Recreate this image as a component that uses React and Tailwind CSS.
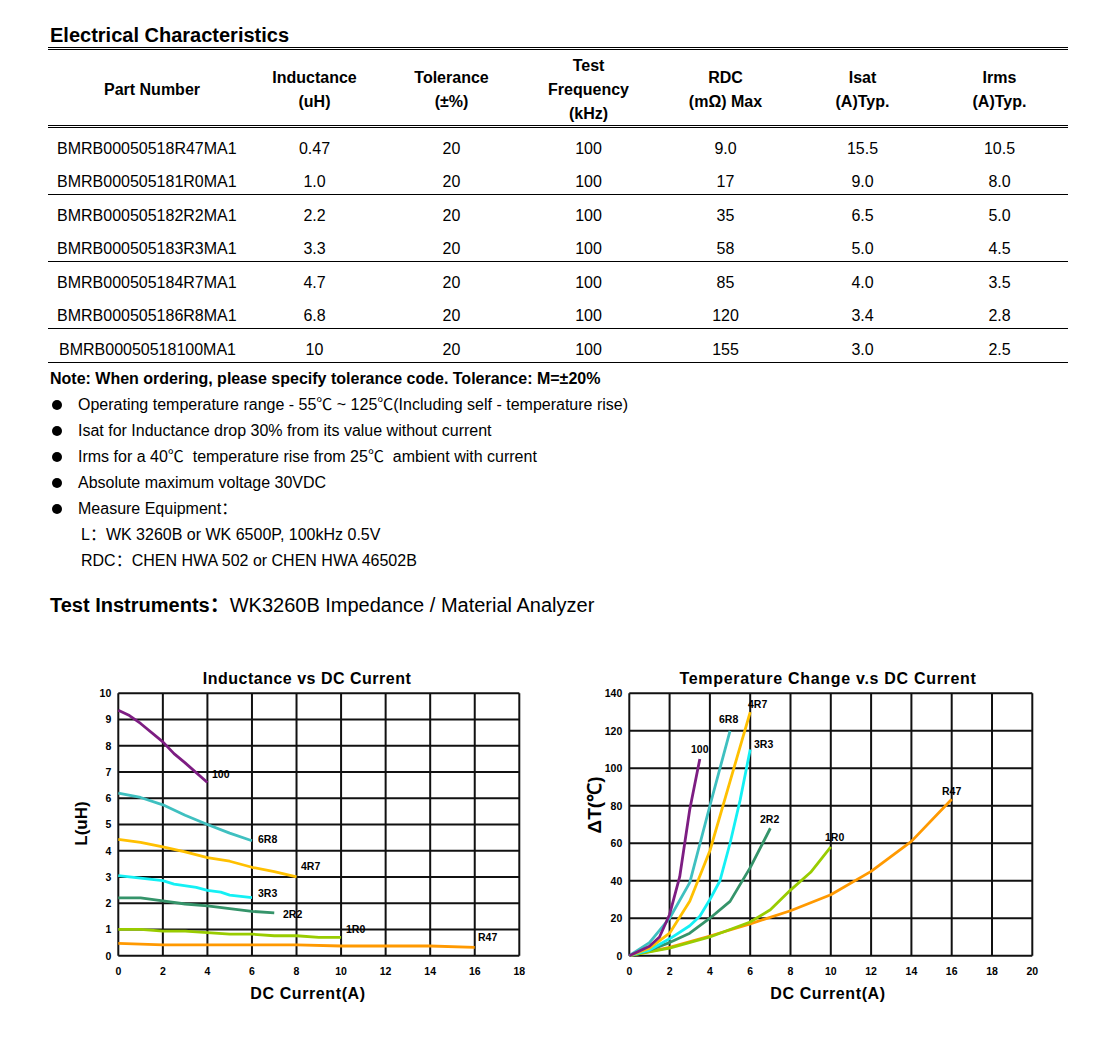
import React from "react";

const rows = [
  [
    ["BMRB00050518R47MA1", "0.47", "20", "100", "9.0", "15.5", "10.5"],
    ["BMRB000505181R0MA1", "1.0", "20", "100", "17", "9.0", "8.0"],
  ],
  [
    ["BMRB000505182R2MA1", "2.2", "20", "100", "35", "6.5", "5.0"],
    ["BMRB000505183R3MA1", "3.3", "20", "100", "58", "5.0", "4.5"],
  ],
  [
    ["BMRB000505184R7MA1", "4.7", "20", "100", "85", "4.0", "3.5"],
    ["BMRB000505186R8MA1", "6.8", "20", "100", "120", "3.4", "2.8"],
  ],
  [["BMRB00050518100MA1", "10", "20", "100", "155", "3.0", "2.5"]],
];

const inductance = {
  title: "Inductance vs DC Current",
  titleX: 247,
  spacing: 0.5,
  xMax: 18,
  yMax: 10,
  yStep: 1,
  yTitle: "L(uH)",
  yTitlePos: [21.7, 158.5],
  xTitleX: 248,
  plot: [58.3, 459.3, 28.3, 290.7],
  series: [
    { c: "#7d1d82", p: [[0, 9.35], [0.5, 9.15], [1, 8.85], [2, 8.15], [2.5, 7.7], [3, 7.35], [4, 6.6]] },
    { c: "#3fc0c0", p: [[0, 6.2], [1, 6.03], [2, 5.75], [3, 5.35], [4, 5.0], [5, 4.67], [6, 4.38]] },
    { c: "#ffc000", p: [[0, 4.43], [1, 4.32], [2, 4.15], [3, 3.96], [4, 3.74], [5, 3.6], [6, 3.37], [7, 3.2], [8, 3.0]] },
    { c: "#14f0f4", p: [[0, 3.05], [1, 2.96], [2, 2.86], [2.5, 2.73], [3.5, 2.6], [4, 2.49], [4.6, 2.42], [5, 2.31], [6, 2.21]] },
    { c: "#35946a", p: [[0, 2.2], [1, 2.2], [2, 2.09], [3, 1.97], [4, 1.9], [5, 1.79], [6, 1.69], [7, 1.63]] },
    { c: "#99cc00", p: [[0, 1.0], [1, 1.0], [2, 0.94], [3, 0.94], [4, 0.88], [5, 0.82], [6, 0.82], [7, 0.76], [8, 0.76], [9, 0.7], [10, 0.7]] },
    { c: "#ff9900", p: [[0, 0.47], [2, 0.41], [4, 0.41], [6, 0.41], [8, 0.41], [10, 0.37], [12, 0.37], [14, 0.37], [16, 0.32]] },
  ],
  labels: [
    ["100", 152, 109], ["6R8", 198, 174], ["4R7", 241, 201], ["3R3", 198, 228],
    ["2R2", 223, 249], ["1R0", 286, 264], ["R47", 418, 272],
  ],
};

const temperature = {
  title: "Temperature Change v.s DC Current",
  titleX: 258,
  spacing: 0.7,
  xMax: 20,
  yMax: 140,
  yStep: 20,
  yTitle: "ΔT(℃)",
  yTitlePos: [24, 140],
  xTitleX: 258,
  plot: [59.3, 462.3, 28.3, 290.7],
  series: [
    { c: "#ff9900", p: [[0, 0], [2, 4.5], [4, 10.5], [6, 17], [8, 24], [10, 32.5], [12, 45], [14, 61], [16, 83.5]] },
    { c: "#99cc00", p: [[0, 0], [2, 4], [4, 10], [5, 14], [6, 18], [7, 24.5], [8, 35], [9, 44.5], [10, 58]] },
    { c: "#35946a", p: [[0, 0], [1, 3], [2, 7], [3, 12], [4, 20], [5, 29], [6, 47], [7, 68]] },
    { c: "#14f0f4", p: [[0, 0], [1, 3], [2, 9], [3, 16], [3.5, 21], [4, 30], [4.5, 40], [5, 60], [5.5, 83], [6, 110]] },
    { c: "#ffc000", p: [[0, 0], [1, 4], [2, 12], [3, 29], [4, 56], [5, 93], [6, 130]] },
    { c: "#3fc0c0", p: [[0, 0], [1, 7], [2, 20], [3, 39], [4, 80], [5, 120]] },
    { c: "#7d1d82", p: [[0, 0], [1, 5], [1.5, 10], [2, 22], [2.5, 42], [3, 78], [3.5, 105]] },
  ],
  labels: [
    ["4R7", 178, 39], ["6R8", 149, 54], ["100", 121, 84], ["3R3", 184, 79],
    ["2R2", 190, 154], ["1R0", 255, 172], ["R47", 372, 126],
  ],
};

function Chart({ d }) {
  const [x0, x1, y0, y1] = d.plot;
  const X = (v) => x0 + (v / d.xMax) * (x1 - x0);
  const Y = (v) => y1 - (v / d.yMax) * (y1 - y0);
  const xs = [];
  for (let v = 0; v <= d.xMax; v += 2) xs.push(v);
  const ys = [];
  for (let v = 0; v <= d.yMax; v += d.yStep) ys.push(v);
  return (
    <svg width="480" height="345" viewBox="0 0 480 345" className="shrink-0" fontFamily="'Liberation Sans', Arial, sans-serif">
      <text x={d.titleX} y="19" textAnchor="middle" fontSize="16" fontWeight="700" letterSpacing={d.spacing}>
        {d.title}
      </text>
      {xs.map((v) => (
        <line key={"gx" + v} x1={X(v)} x2={X(v)} y1={y0} y2={y1} stroke="#111" strokeWidth="2" />
      ))}
      {ys.map((v) => (
        <line key={"gy" + v} x1={x0} x2={x1} y1={Y(v)} y2={Y(v)} stroke="#111" strokeWidth="2" />
      ))}
      {ys.map((v) => (
        <text key={"ty" + v} x={x0 - 7} y={Y(v) + 3.8} textAnchor="end" fontSize="10.5" fontWeight="700">
          {v}
        </text>
      ))}
      {xs.map((v) => (
        <text key={"tx" + v} x={X(v)} y={y1 + 19.5} textAnchor="middle" fontSize="10.5" fontWeight="700">
          {v}
        </text>
      ))}
      {d.series.map((s, i) => (
        <polyline
          key={i}
          points={s.p.map(([a, b]) => `${X(a)},${Y(b)}`).join(" ")}
          fill="none"
          stroke={s.c}
          strokeWidth="2.8"
          strokeLinejoin="round"
        />
      ))}
      {d.labels.map(([t, lx, ly]) => (
        <text key={t} x={lx} y={ly + 3.8} fontSize="10.5" fontWeight="700">
          {t}
        </text>
      ))}
      <text
        x={d.yTitlePos[0]}
        y={d.yTitlePos[1]}
        transform={`rotate(-90 ${d.yTitlePos[0]} ${d.yTitlePos[1]})`}
        textAnchor="middle"
        dominantBaseline="central"
        fontSize={d.yTitle.startsWith("L") ? "17" : "19"}
        fontWeight="700"
      >
        {d.yTitle}
      </text>
      <text x={d.xTitleX} y="334" textAnchor="middle" fontSize="16" fontWeight="700" letterSpacing="0.6">
        DC Current(A)
      </text>
    </svg>
  );
}

function Row({ r, last }) {
  return (
    <div className="grid grid-cols-[198px_repeat(6,137px)] h-[33px] pt-[9px] items-center">
      <div className={last ? "pl-[11px]" : "pl-[9px]"}>{r[0]}</div>
      {r.slice(1).map((v, i) => (
        <div key={i} className="text-center">
          {v}
        </div>
      ))}
    </div>
  );
}

const headers = [
  ["Inductance", "(uH)"],
  ["Tolerance", "(±%)"],
  ["Test", "Frequency", "(kHz)"],
  ["RDC", "(mΩ) Max"],
  ["Isat", "(A)Typ."],
  ["Irms", "(A)Typ."],
];

export default function App() {
  return (
    <div className="w-[1113px] min-h-[1041px] bg-white text-black text-[16px] font-['Liberation_Sans','Noto_Sans_CJK_SC',sans-serif]">
      <div className="pl-[48px] pt-[23px]">
        <h2 className="pl-[2px] text-[20px] leading-[24px] font-bold">Electrical Characteristics</h2>
        <div className="w-[1020px] border-t-[3px] border-double border-black">
          <div className="grid grid-cols-[198px_repeat(6,137px)] h-[75px] pt-[4px] items-center font-bold leading-[24px]">
            <div className="text-center pl-[10px]">Part Number</div>
            {headers.map((h, i) => (
              <div key={i} className="text-center">
                {h.map((l) => (
                  <div key={l}>{l}</div>
                ))}
              </div>
            ))}
          </div>
          <div className="border-t-[3px] border-double border-black">
            {rows.map((g, gi) => (
              <div key={gi} className="border-b border-black">
                {g.map((r) => (
                  <Row key={r[0]} r={r} last={gi === 3} />
                ))}
              </div>
            ))}
          </div>
        </div>

        <div className="mt-[3px] pl-[2px] leading-[26px]">
          <p className="font-bold">Note: When ordering, please specify tolerance code. Tolerance: M=±20%</p>
          <ul>
            {[
              "Operating temperature range - 55℃ ~ 125℃(Including self - temperature rise)",
              "Isat for Inductance drop 30% from its value without current",
              "Irms for a 40℃  temperature rise from 25℃  ambient with current",
              "Absolute maximum voltage 30VDC",
              "Measure Equipment：",
            ].map((t) => (
              <li key={t} className="flex items-center">
                <span className="w-[28px] pl-[2px] flex">
                  <span className="w-[10px] h-[10px] rounded-full bg-black" />
                </span>
                <span className="whitespace-pre">{t}</span>
              </li>
            ))}
          </ul>
          <p className="pl-[31px]">L：WK 3260B or WK 6500P, 100kHz 0.5V</p>
          <p className="pl-[31px]">RDC：CHEN HWA 502 or CHEN HWA 46502B</p>
        </div>

        <p className="mt-[18px] pl-[2px] leading-[26px] text-[20px]">
          <span className="font-bold">Test Instruments：</span>
          WK3260B Impedance / Material Analyzer
        </p>

        <div className="mt-[47px] ml-[12px] flex gap-[30px]">
          <Chart d={inductance} />
          <Chart d={temperature} />
        </div>
      </div>
    </div>
  );
}
